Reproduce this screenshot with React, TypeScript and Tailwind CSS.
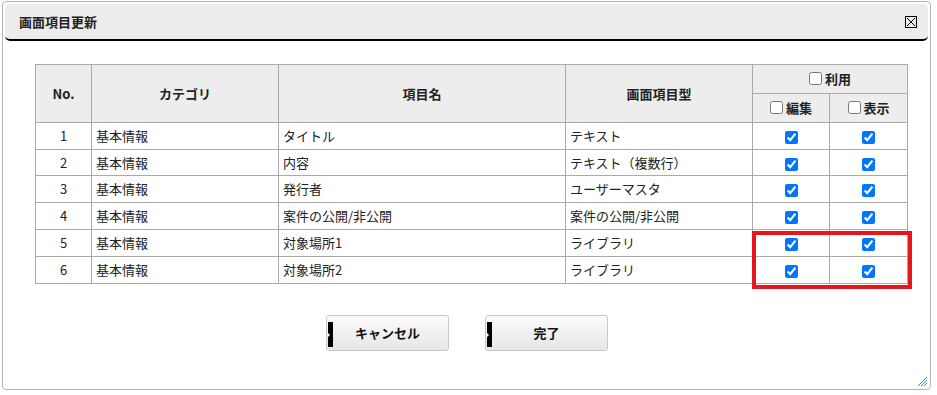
import React from "react";

const rows = [
  ["1", "基本情報", "タイトル", "テキスト"],
  ["2", "基本情報", "内容", "テキスト（複数行）"],
  ["3", "基本情報", "発行者", "ユーザーマスタ"],
  ["4", "基本情報", "案件の公開/非公開", "案件の公開/非公開"],
  ["5", "基本情報", "対象場所1", "ライブラリ"],
  ["6", "基本情報", "対象場所2", "ライブラリ"],
];

const font = { fontFamily: '"Noto Sans CJK JP", "Noto Sans", sans-serif' };

function Btn({ label }: { label: string }) {
  return (
    <button className="relative w-[123px] h-[36px] border border-[#c8c8c8] rounded-[3px] bg-gradient-to-b from-[#fbfbfb] to-[#e6e6e6] text-[13px] font-bold text-[#111] flex items-center justify-center">
      <span className="absolute left-[1px] top-[6px] w-[5px] h-[25px] bg-black">
        <span className="absolute left-0 top-[11px] w-0 h-0 border-y-[2px] border-y-transparent border-l-[2px] border-l-white" />
      </span>
      {label}
    </button>
  );
}

export default function App() {
  return (
    <div className="w-[937px] h-[395px] bg-white overflow-hidden pt-[1px] pl-[2px]" style={font}>
      <div className="relative w-[929px] h-[389px] border border-[#b4b4b4] rounded-[4px] bg-white p-[2px]">
        <div className="h-[37px] bg-[#ececec] rounded-[5px] border-b-[2px] border-black flex items-center justify-between pl-[14px] pr-[10px]">
          <span className="text-[13px] font-bold text-[#222]">画面項目更新</span>
          <span className="w-[12px] h-[12px] border border-black flex items-center justify-center mr-[1px]">
            <svg width="10" height="10" viewBox="0 0 10 10">
              <path d="M1 1L9 9M9 1L1 9" stroke="#000" strokeWidth="1" />
            </svg>
          </span>
        </div>
        <div className="pl-[30px] pt-[23px]">
          <table className="border-collapse text-[13px] text-[#222]" style={{ tableLayout: "fixed", width: 872 }}>
            <colgroup>
              <col style={{ width: 56 }} />
              <col style={{ width: 187 }} />
              <col style={{ width: 287 }} />
              <col style={{ width: 187 }} />
              <col style={{ width: 77 }} />
              <col style={{ width: 78 }} />
            </colgroup>
            <thead>
              <tr className="h-[29px] bg-[#ededed]">
                <th rowSpan={2} className="border border-[#aaa] font-bold text-center">No.</th>
                <th rowSpan={2} className="border border-[#aaa] font-bold text-center">カテゴリ</th>
                <th rowSpan={2} className="border border-[#aaa] font-bold text-center">項目名</th>
                <th rowSpan={2} className="border border-[#aaa] font-bold text-center">画面項目型</th>
                <th colSpan={2} className="border border-[#aaa] font-bold text-center">
                  <span className="inline-flex items-center gap-[3px]">
                    <input type="checkbox" className="w-[13px] h-[13px] m-0" />利用
                  </span>
                </th>
              </tr>
              <tr className="h-[29px] bg-[#ededed]">
                <th className="border border-[#aaa] font-bold text-center">
                  <span className="inline-flex items-center gap-[3px]">
                    <input type="checkbox" className="w-[13px] h-[13px] m-0" />編集
                  </span>
                </th>
                <th className="border border-[#aaa] font-bold text-center">
                  <span className="inline-flex items-center gap-[3px]">
                    <input type="checkbox" className="w-[13px] h-[13px] m-0" />表示
                  </span>
                </th>
              </tr>
            </thead>
            <tbody>
              {rows.map((r, i) => (
                <tr key={i} className={i === 1 ? "h-[26px]" : "h-[27px]"}>
                  <td className="border border-[#aaa] text-center">{r[0]}</td>
                  <td className="border border-[#aaa] pl-[4px]">{r[1]}</td>
                  <td className="border border-[#aaa] pl-[4px]">{r[2]}</td>
                  <td className="border border-[#aaa] pl-[4px]">{r[3]}</td>
                  <td className="border border-[#aaa] text-center">
                    <input type="checkbox" defaultChecked className="w-[13px] h-[13px] m-0 align-middle" />
                  </td>
                  <td className="border border-[#aaa] text-center">
                    <input type="checkbox" defaultChecked className="w-[13px] h-[13px] m-0 align-middle" />
                  </td>
                </tr>
              ))}
            </tbody>
          </table>
        </div>
        <div className="flex justify-center gap-[36px] pt-[31px] pl-[1px]">
          <Btn label="キャンセル" />
          <Btn label="完了" />
        </div>
        <div className="absolute left-[749px] top-[229px] w-[160px] h-[58px] border-[4px] border-[#e8141e]" />
        <svg className="absolute right-[2px] bottom-[2px]" width="11" height="11" viewBox="0 0 11 11" shapeRendering="crispEdges">
          <path d="M1 10L10 1M4 10L10 4M7 10L10 7" stroke="#1a9ae0" strokeWidth="1.2" />
        </svg>
      </div>
    </div>
  );
}
